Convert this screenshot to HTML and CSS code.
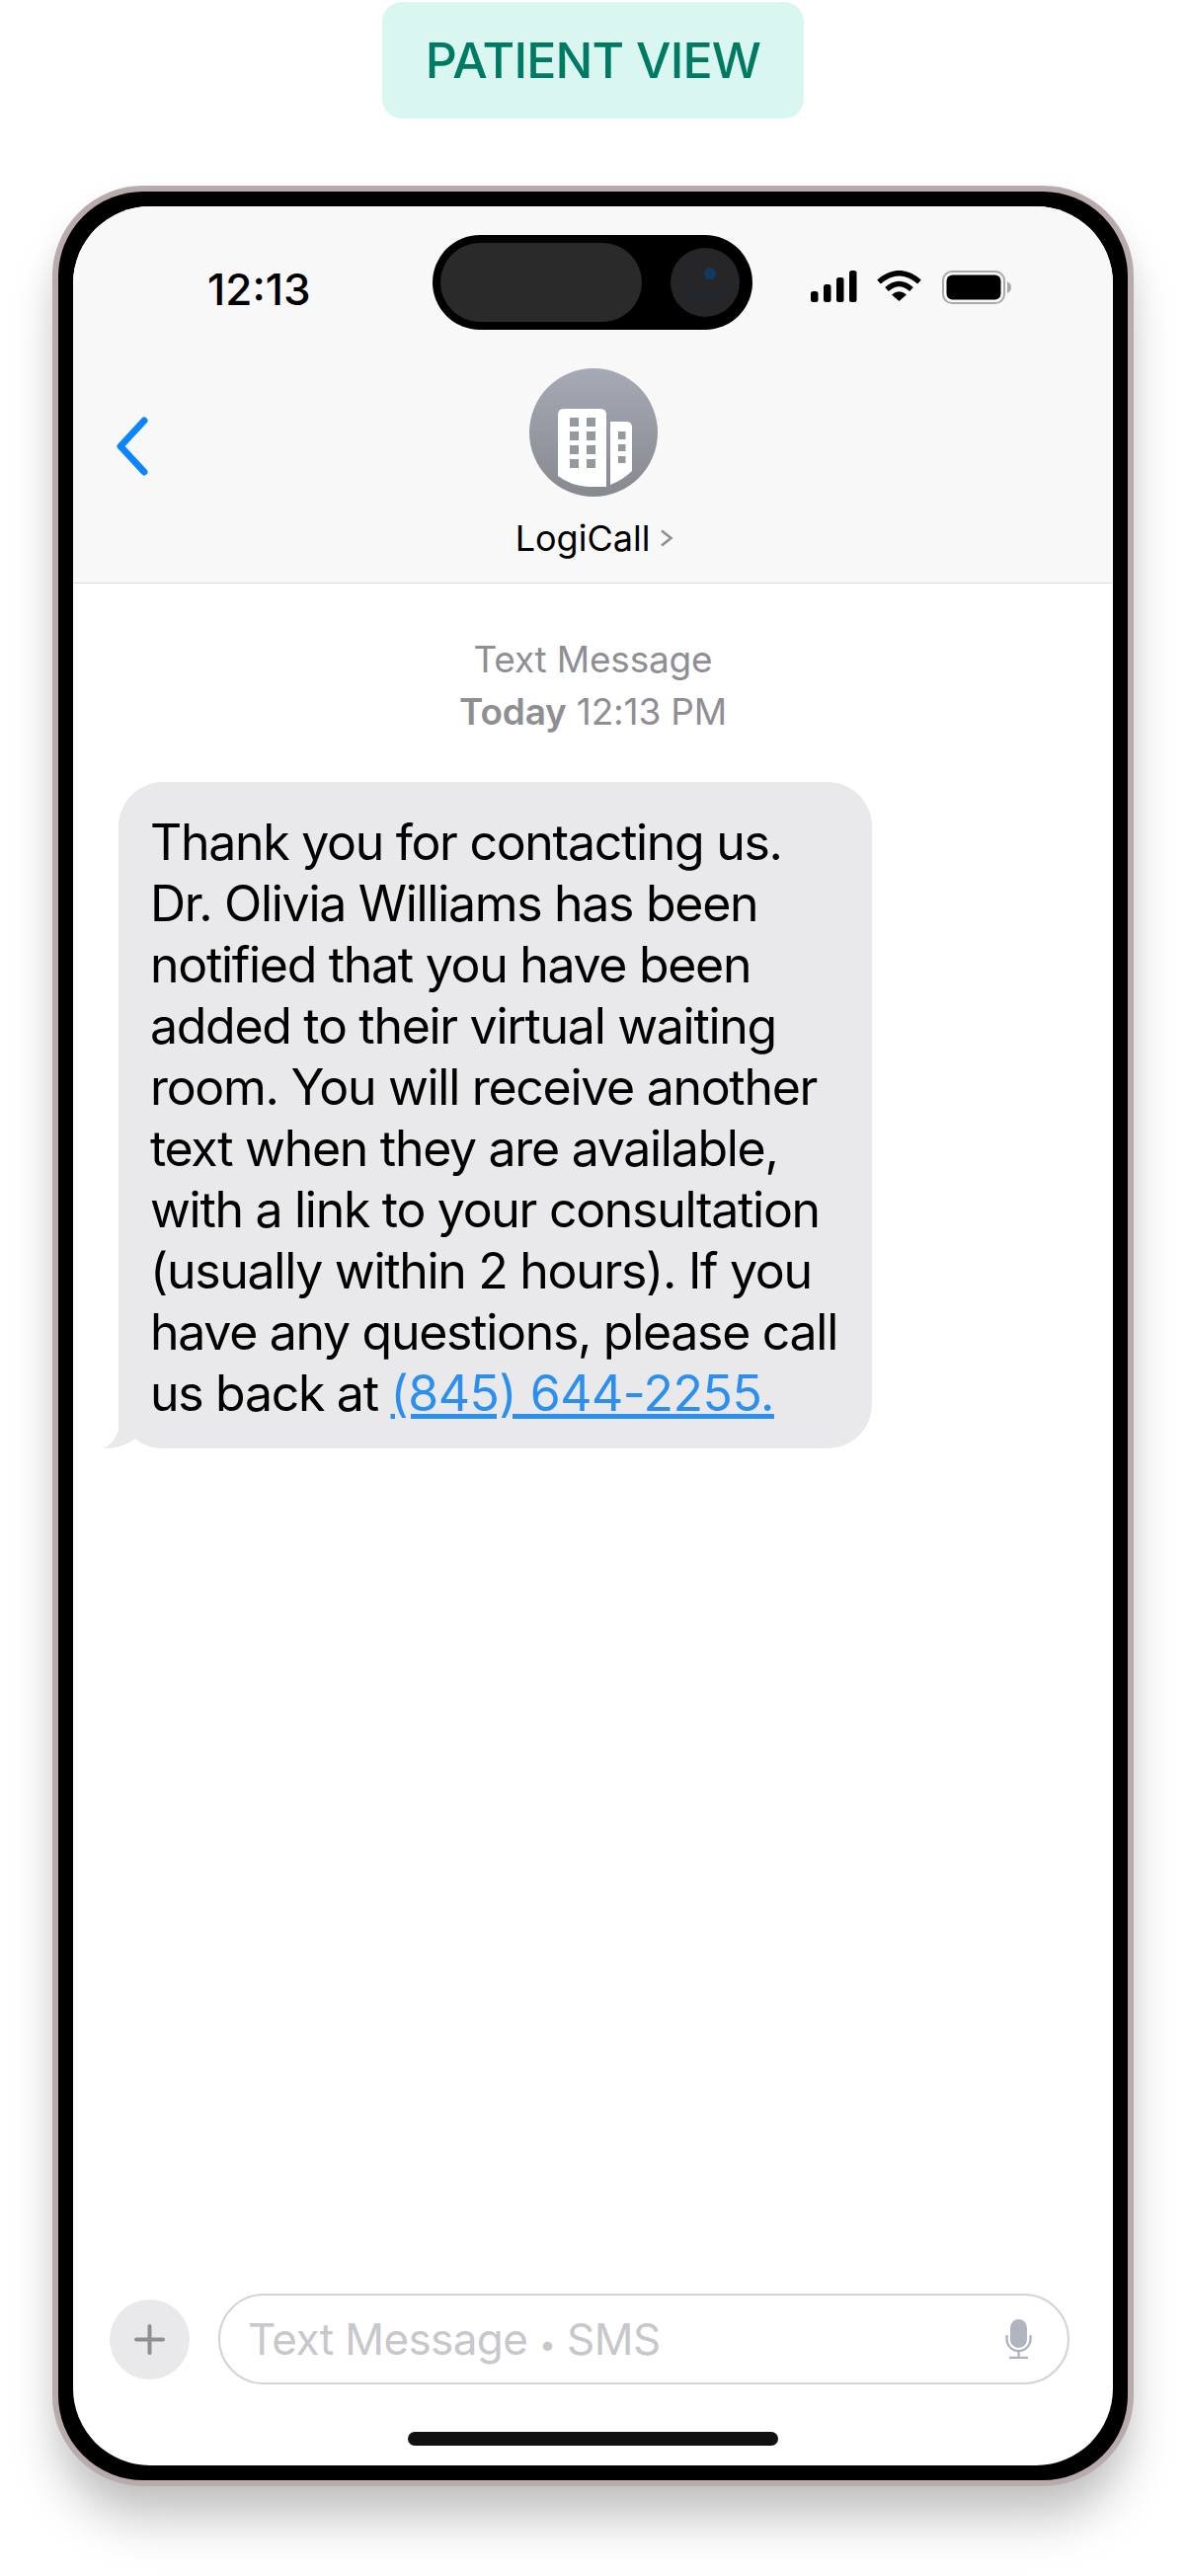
FILE: index.html
```html
<!DOCTYPE html>
<html lang="en">
<head>
  <meta charset="UTF-8" />
  <title>Patient View</title>
  <link rel="stylesheet" href="styles.css">
</head>
<body>

  <div class="view-tag">PATIENT VIEW</div>

  <div class="phone">
    <div class="screen">

      <div class="top-bar">
        <div class="status">
          <div class="clock">12:13</div>
          <div class="island">
            <div class="island-pill"></div>
            <svg class="island-cam" viewBox="0 0 70 70">
              <circle cx="35" cy="35" r="35" fill="#262628"/>
              <path d="M17 37 Q35 66 54 37" fill="none" stroke="#1b2b3b" stroke-width="2"/>
              <circle cx="40" cy="26" r="6" fill="#12395e"/>
            </svg>
          </div>
          <div class="status-icons">
            <svg class="signal" viewBox="0 0 47 32">
              <rect x="0" y="21" width="7.500" height="11" rx="2.500"/>
              <rect x="13" y="14" width="7.500" height="18" rx="2.500"/>
              <rect x="26" y="7" width="7.500" height="25" rx="2.500"/>
              <rect x="39" y="0" width="7.500" height="32" rx="2.500"/>
            </svg>
            <svg class="wifi" viewBox="0 0 45 31">
              <path d="M2 11.500 Q22.500 -6 43 11.500" fill="none" stroke="#000" stroke-width="5.500"/>
              <path d="M10 19 Q22.500 8 35 19" fill="none" stroke="#000" stroke-width="5.500"/>
              <path d="M15 24.500 Q22.500 18 30 24.500 L22.500 31 Z"/>
            </svg>
            <svg class="battery" viewBox="0 0 70 34">
              <rect x="1" y="1" width="62" height="32" rx="9" fill="none" stroke="#a9a9a9" stroke-width="2"/>
              <rect x="4.500" y="4.500" width="55" height="25" rx="6"/>
              <path d="M66 11 Q70 13 70 17 Q70 21 66 23 Z" fill="#a9a9a9"/>
            </svg>
          </div>
        </div>

        <div class="nav">
          <svg class="back" viewBox="0 0 34 60">
            <path d="M29 4 L5 30 L29 56" fill="none" stroke="#0a84ff" stroke-width="7" stroke-linecap="round" stroke-linejoin="round"/>
          </svg>
          <div class="contact">
            <div class="avatar">
              <svg viewBox="0 0 130 130">
                <path d="M29 109 V47 q0-6 6-6 H72 q6 0 6 6 V120 H60 Q42 119 29 109 Z" fill="#fff"/>
                <path d="M82 118 V54 H98 q6 0 6 6 V104 Q95 113 82 118 Z" fill="#fff"/>
                <g fill="#94989f">
                  <rect x="41" y="50" width="9" height="9"/><rect x="58" y="50" width="9" height="9"/>
                  <rect x="41" y="64" width="9" height="9"/><rect x="58" y="64" width="9" height="9"/>
                  <rect x="41" y="78" width="9" height="9"/><rect x="58" y="78" width="9" height="9"/>
                  <rect x="41" y="92" width="9" height="9"/><rect x="58" y="92" width="9" height="9"/>
                  <rect x="90" y="64" width="7.500" height="8"/>
                  <rect x="90" y="77" width="7.500" height="7"/>
                  <rect x="90" y="89" width="7.500" height="7"/>
                </g>
              </svg>
            </div>
            <div class="contact-name">
              LogiCall
              <svg class="name-arrow" viewBox="0 0 14 18">
                <path d="M2 1.500 L11.500 9 L2 16.500" fill="none" stroke="#8e8e93" stroke-width="2.600"/>
              </svg>
            </div>
          </div>
        </div>
      </div>

      <div class="thread">
        <div class="thread-meta">
          Text Message<br/>
          <b>Today</b> 12:13 PM
        </div>
        <div class="bubble">
          Thank you for contacting us.<br/>
          Dr. Olivia Williams has been<br/>
          notified that you have been<br/>
          added to their virtual waiting<br/>
          room. You will receive another<br/>
          text when they are available,<br/>
          with a link to your consultation<br/>
          (usually within 2 hours). If you<br/>
          have any questions, please call<br/>
          us back at <a class="phone-link" href="#">(845) 644-2255.</a>
          <svg class="bubble-tail" viewBox="0 0 66 47">
            <path d="M16 0 V25 C16 35 8 44 0 47 C12 47 24 44 33 37 C40 43 50 47 66 47 V0 Z" fill="#e9e9eb"/>
          </svg>
        </div>
      </div>

      <div class="composer">
        <div class="plus-btn">
          <svg viewBox="0 0 31 31">
            <path d="M15.500 2 V29 M2 15.500 H29" fill="none" stroke="#8e8e93" stroke-width="4" stroke-linecap="round"/>
          </svg>
        </div>
        <div class="text-field">
          <span class="placeholder">Text Message <span class="dot">•</span> SMS</span>
          <svg class="mic" viewBox="0 0 27 40">
            <rect x="5" y="0" width="17" height="29" rx="8.500" fill="#b0b4c0"/>
            <path d="M1.500 16 V20 A12 12 0 0 0 25.500 20 V16 M13.500 32 V38 M4 39 H23" fill="none" stroke="#b0b4c0" stroke-width="2.400"/>
          </svg>
        </div>
      </div>

      <div class="home-bar"></div>
    </div>
  </div>

</body>
</html>
```

FILE: styles.css
```css
html, body {
  margin: 0;
  background-color: white;
  font-family: Inter, "Liberation Sans", sans-serif;
}
body {
  height: 2609px;
  padding-top: 2px;
  box-sizing: border-box;
  overflow: hidden;
  display: flex;
  flex-direction: column;
  align-items: center;
}
.view-tag {
  width: 427px;
  height: 118px;
  flex: none;
  display: flex;
  align-items: center;
  justify-content: center;
  background-color: #d9f7f0;
  border-radius: 20px;
  color: #007a63;
  font-size: 50px;
  font-weight: 500;
  letter-spacing: -0.8px;
}
.phone {
  width: 1095px;
  height: 2330px;
  flex: none;
  margin-top: 68px;
  box-sizing: border-box;
  padding: 15px;
  background-color: black;
  border: 6px solid #b9aaab;
  border-radius: 92px;
  box-shadow: 0 40px 50px -6px rgba(0,0,0,0.22), 0 10px 30px rgba(0,0,0,0.05);
}
.screen {
  height: 100%;
  display: flex;
  flex-direction: column;
  background-color: white;
  border-radius: 78px;
  overflow: hidden;
}
.top-bar {
  height: 382px;
  flex: none;
  box-sizing: border-box;
  background-color: #f8f8f8;
  border-bottom: 1px solid #d9d9d9;
  padding-top: 29px;
}
.status {
  display: flex;
  align-items: flex-start;
}
.clock {
  width: 228px;
  margin-left: 136px;
  margin-top: 30px;
  font-size: 44px;
  font-weight: 500;
  line-height: 50px;
  color: black;
}
.island {
  width: 324px;
  height: 96px;
  flex: none;
  box-sizing: border-box;
  display: flex;
  align-items: center;
  gap: 29px;
  padding: 0 13px 0 8px;
  background-color: black;
  border-radius: 48px;
}
.island-pill {
  width: 204px;
  height: 80px;
  background-color: #2a2a2a;
  border-radius: 40px;
}
.island-cam {
  width: 70px;
  height: 70px;
}
.status-icons {
  display: flex;
  align-items: flex-start;
  margin-left: 59px;
  margin-top: 36px;
}
.signal {
  width: 47px;
  height: 32px;
}
.wifi {
  width: 45px;
  height: 31px;
  margin-left: 20px;
}
.battery {
  width: 70px;
  height: 34px;
  margin-left: 21px;
}
.nav {
  display: grid;
  grid-template-columns: 1fr auto 1fr;
  margin-top: 39px;
}
.back {
  width: 34px;
  height: 60px;
  margin-left: 43px;
  margin-top: 49px;
}
.contact {
  display: flex;
  flex-direction: column;
  align-items: center;
}
.avatar {
  width: 130px;
  height: 130px;
  border-radius: 50%;
  overflow: hidden;
  background: linear-gradient(#a6aab6, #86898f);
}
.avatar svg {
  display: block;
  width: 130px;
  height: 130px;
}
.contact-name {
  display: flex;
  align-items: center;
  gap: 10px;
  margin-top: 19px;
  padding-left: 3px;
  font-size: 36px;
  line-height: 46px;
  color: black;
}
.name-arrow {
  width: 14px;
  height: 18px;
}
.thread {
  flex: 1;
  padding: 0 46px;
}
.thread-meta {
  margin-top: 50px;
  text-align: center;
  font-size: 37px;
  letter-spacing: -0.2px;
  line-height: 53px;
  color: #8e8e93;
}
.thread-meta b {
  font-weight: 600;
}
.bubble {
  position: relative;
  z-index: 0;
  width: 763px;
  height: 675px;
  margin-top: 45px;
  box-sizing: border-box;
  padding: 30px 0 0 32px;
  background-color: #e9e9eb;
  border-radius: 45px;
  font-size: 50px;
  letter-spacing: -1.3px;
  line-height: 62px;
  color: black;
  white-space: nowrap;
}
.phone-link {
  color: #2b8ff0;
  letter-spacing: -0.5px;
}
.bubble-tail {
  position: absolute;
  left: -16px;
  bottom: 0;
  width: 66px;
  height: 47px;
  z-index: -1;
}
.composer {
  display: flex;
  align-items: center;
  gap: 29px;
  padding: 0 44px 0 37px;
}
.plus-btn {
  width: 81px;
  height: 81px;
  flex: none;
  display: flex;
  align-items: center;
  justify-content: center;
  background-color: #e9e9eb;
  border-radius: 50%;
}
.plus-btn svg {
  width: 31px;
  height: 31px;
}
.text-field {
  flex: 1;
  height: 92px;
  box-sizing: border-box;
  display: flex;
  align-items: center;
  justify-content: space-between;
  padding: 0 36px 0 28px;
  border: 2px solid #d4d4d6;
  border-radius: 46px;
}
.placeholder {
  font-size: 44px;
  letter-spacing: -0.6px;
  color: #c7c7cc;
}
.dot {
  font-size: 30px;
}
.mic {
  width: 27px;
  height: 40px;
}
.home-bar {
  width: 375px;
  height: 14px;
  flex: none;
  margin: 48px auto 20px;
  background-color: #111;
  border-radius: 7px;
}
```
